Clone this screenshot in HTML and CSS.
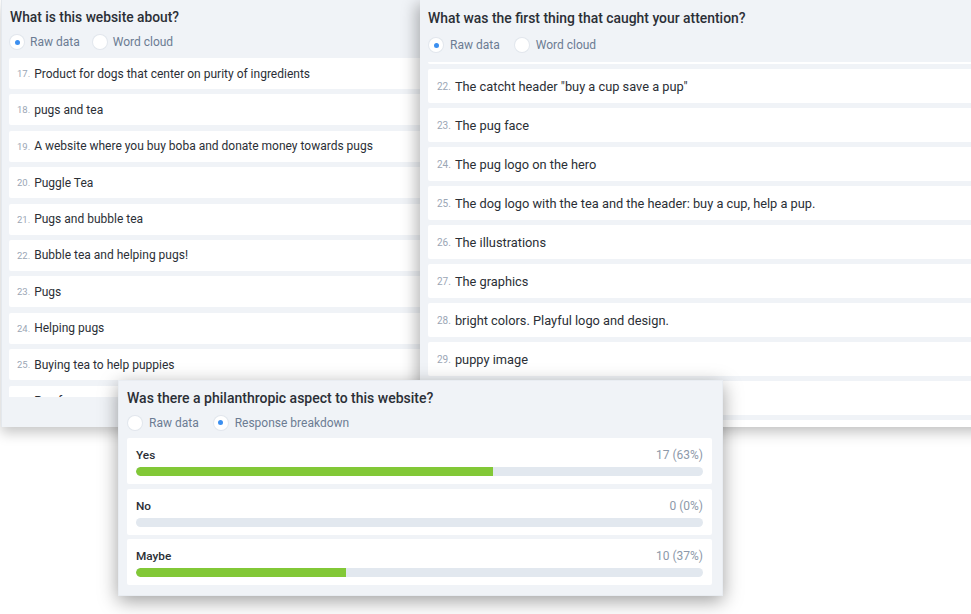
FILE: index.html
```html
<!DOCTYPE html>
<html lang="en">
<head>
<meta charset="utf-8">
<title>Survey results</title>
<link rel="stylesheet" href="styles.css">
</head>
<body>
<div class="canvas">

  <section class="win win-left">
    <h2 class="q">What is this website about?</h2>
    <div class="radios">
      <span class="radio on"><span class="circle"></span>Raw data</span>
      <span class="radio"><span class="circle"></span>Word cloud</span>
    </div>
    <div class="list">
      <div class="item"><span class="num">17.</span>Product for dogs that center on purity of ingredients</div>
      <div class="item"><span class="num">18.</span>pugs and tea</div>
      <div class="item"><span class="num">19.</span>A website where you buy boba and donate money towards pugs</div>
      <div class="item"><span class="num">20.</span>Puggle Tea</div>
      <div class="item"><span class="num">21.</span>Pugs and bubble tea</div>
      <div class="item"><span class="num">22.</span>Bubble tea and helping pugs!</div>
      <div class="item"><span class="num">23.</span>Pugs</div>
      <div class="item"><span class="num">24.</span>Helping pugs</div>
      <div class="item"><span class="num">25.</span>Buying tea to help puppies</div>
      <div class="item"><span class="num">26.</span>Pug for pugs</div>
    </div>
  </section>

  <section class="win win-right">
    <h2 class="q">What was the first thing that caught your attention?</h2>
    <div class="radios">
      <span class="radio on"><span class="circle"></span>Raw data</span>
      <span class="radio"><span class="circle"></span>Word cloud</span>
    </div>
    <div class="list">
      <div class="list-inner">
        <div class="item"><span class="num">21.</span>The header</div>
        <div class="item"><span class="num">22.</span>The catcht header "buy a cup save a pup"</div>
        <div class="item"><span class="num">23.</span>The pug face</div>
        <div class="item"><span class="num">24.</span>The pug logo on the hero</div>
        <div class="item"><span class="num">25.</span>The dog logo with the tea and the header: buy a cup, help a pup.</div>
        <div class="item"><span class="num">26.</span>The illustrations</div>
        <div class="item"><span class="num">27.</span>The graphics</div>
        <div class="item"><span class="num">28.</span>bright colors. Playful logo and design.</div>
        <div class="item"><span class="num">29.</span>puppy image</div>
        <div class="item"><span class="num">30.</span>The pug</div>
        <div class="item"><span class="num">31.</span>The logo</div>
      </div>
    </div>
  </section>

  <section class="win win-bottom">
    <h2 class="q">Was there a philanthropic aspect to this website?</h2>
    <div class="radios">
      <span class="radio"><span class="circle"></span>Raw data</span>
      <span class="radio on"><span class="circle"></span>Response breakdown</span>
    </div>
    <div class="rows">
      <div class="row">
        <div class="row-head"><span class="label">Yes</span><span class="count">17 (63%)</span></div>
        <div class="track"><div class="fill" style="width:63%"></div></div>
      </div>
      <div class="row">
        <div class="row-head"><span class="label">No</span><span class="count">0 (0%)</span></div>
        <div class="track"><div class="fill" style="width:0%"></div></div>
      </div>
      <div class="row">
        <div class="row-head"><span class="label">Maybe</span><span class="count">10 (37%)</span></div>
        <div class="track"><div class="fill" style="width:37%"></div></div>
      </div>
    </div>
  </section>

</div>
</body>
</html>
```
FILE: styles.css
```css
* { box-sizing: border-box; }

html, body {
  margin: 0;
  padding: 0;
  background: #ffffff;
  overflow: hidden;
}

body {
  font-family: Roboto, "Liberation Sans", Arial, sans-serif;
  color: #2b2f36;
}

.canvas {
  position: relative;
  width: 971px;
  height: 614px;
  overflow: hidden;
  background: #ffffff;
}

.win {
  position: absolute;
  background: #f0f3f7;
  display: flex;
  flex-direction: column;
}

.q {
  margin: 0;
  font-size: 14px;
  font-weight: 500;
  line-height: 20px;
  color: #2b2f36;
  white-space: nowrap;
}

.radios {
  display: flex;
  align-items: center;
  gap: 15px;
  height: 16px;
  padding-left: 1px;
}

.radio {
  display: flex;
  align-items: center;
  gap: 7px;
  font-size: 12px;
  color: #6c7c93;
  white-space: nowrap;
}

.circle {
  width: 14px;
  height: 14px;
  border-radius: 50%;
  background: #ffffff;
  box-shadow: 0 0 0 1px #e2e7ed;
  display: flex;
  align-items: center;
  justify-content: center;
}

.radio.on .circle::after {
  content: "";
  width: 5px;
  height: 5px;
  border-radius: 50%;
  background: #3b8ff0;
}

.list {
  overflow: hidden;
  display: flex;
  flex-direction: column;
}

.item {
  flex: none;
  background: #ffffff;
  display: flex;
  align-items: center;
  white-space: nowrap;
  border-radius: 2px;
}

.num {
  font-size: 9.5px;
  color: #9ba6b5;
  margin-right: 4px;
}

/* left window */
.win-left {
  left: 1px;
  top: 0;
  width: 480px;
  height: 427px;
  padding: 7px 0 0 7px;
  border-left: 1px solid #e4e8ed;
  box-shadow: 0 6px 12px rgba(0, 0, 0, 0.22);
  z-index: 1;
}

.win-left .q { font-size: 13.8px; padding-left: 1px; }

.win-left .radios { margin-top: 7px; gap: 13px; }

.win-left .radio { gap: 6px; }

.win-left .list {
  margin-top: 8px;
  height: 339px;
  gap: 5.4px;
}

.win-left .item {
  height: 31px;
  padding-left: 8px;
  font-size: 12px;
}

/* right window */
.win-right {
  left: 420px;
  top: 0;
  width: 600px;
  height: 427px;
  padding: 8px 0 0 8px;
  box-shadow: -4px 4px 14px rgba(0, 0, 0, 0.28);
  z-index: 2;
}

.win-right .q { font-size: 13.9px; }

.win-right .radios { margin-top: 9px; }

.win-right .list {
  margin-top: 9px;
  flex: 1;
}

.win-right .list-inner {
  display: flex;
  flex-direction: column;
  gap: 5px;
  margin-top: -32px;
}

.win-right .item {
  height: 34px;
  padding-left: 9px;
  font-size: 12.8px;
}

.win-right .num { font-size: 10px; }

/* bottom window */
.win-bottom {
  left: 118px;
  top: 380px;
  width: 605px;
  height: 216px;
  padding: 7px 10px 10px 8px;
  border: 1px solid #e9edf2;
  box-shadow: 0 5px 18px rgba(0, 0, 0, 0.38);
  z-index: 3;
}

.win-bottom .radios { margin-top: 7px; }

.rows {
  margin-top: 8px;
  display: flex;
  flex-direction: column;
  gap: 4.5px;
}

.row {
  height: 46px;
  background: #ffffff;
  border-radius: 2px;
  padding: 10px 9px 0 9px;
  display: flex;
  flex-direction: column;
}

.row-head {
  display: flex;
  justify-content: space-between;
  align-items: center;
  height: 14px;
}

.label {
  font-size: 11.8px;
  font-weight: 500;
  color: #2b2f36;
}

.count {
  font-size: 12px;
  color: #8d99a9;
}

.track {
  margin-top: 5px;
  height: 9px;
  border-radius: 5px;
  background: #e2e8ef;
  overflow: hidden;
}

.fill {
  height: 100%;
  background: #82c837;
  border-radius: 5px 0 0 5px;
}
```
